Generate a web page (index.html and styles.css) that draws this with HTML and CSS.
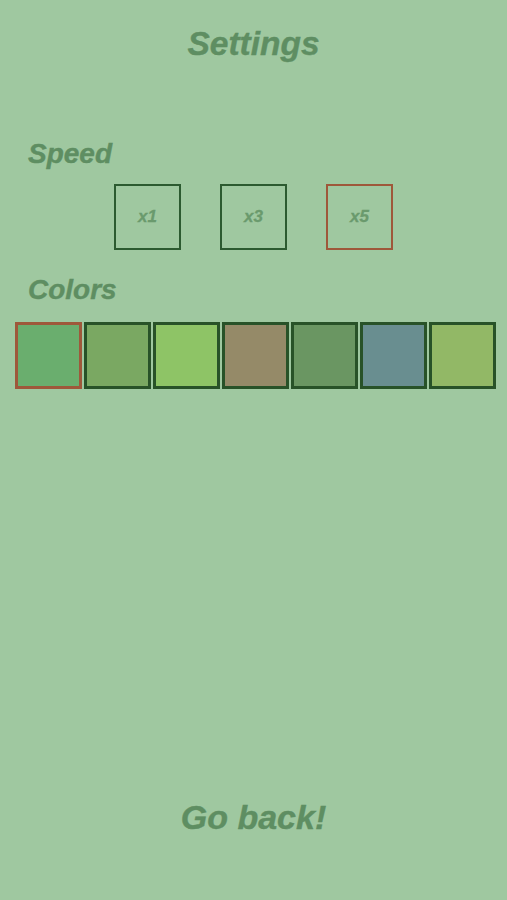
FILE: index.html
```html
<!DOCTYPE html>
<html>
<head>
<meta charset="utf-8">
<link rel="stylesheet" href="styles.css">
</head>
<body>
<div class="screen">
  <h1 class="title">Settings</h1>
  <div class="label label-speed">Speed</div>
  <div class="speed-row">
    <div class="speed-box">x1</div>
    <div class="speed-box">x3</div>
    <div class="speed-box selected">x5</div>
  </div>
  <div class="label label-colors">Colors</div>
  <div class="color-row">
    <div class="swatch selected c1"></div>
    <div class="swatch c2"></div>
    <div class="swatch c3"></div>
    <div class="swatch c4"></div>
    <div class="swatch c5"></div>
    <div class="swatch c6"></div>
    <div class="swatch c7"></div>
  </div>
  <div class="back">Go back!</div>
</div>
</body>
</html>
```
FILE: styles.css
```css
html, body {
  margin: 0;
  padding: 0;
  background: #9fc8a0;
}
.screen {
  height: 900px;
  display: flex;
  flex-direction: column;
  font-family: "Liberation Sans", Arial, sans-serif;
  font-weight: bold;
  font-style: italic;
  color: #5e8e62;
  -webkit-text-stroke: 0.4px #5e8e62;
}
.title {
  margin: 0;
  padding-top: 24px;
  font-size: 33.5px;
  line-height: 40px;
  text-align: center;
  font-weight: bold;
}
.label {
  font-size: 28px;
  line-height: 30px;
  padding-left: 28px;
}
.label-speed { margin-top: 75px; }
.label-colors { margin-top: 25px; }
.speed-row {
  margin-top: 15px;
  display: flex;
  justify-content: center;
  gap: 39px;
}
.speed-box {
  box-sizing: border-box;
  width: 67px;
  height: 66px;
  border: 2px solid #2c5a30;
  display: flex;
  align-items: center;
  justify-content: center;
  font-size: 17px;
  color: #6a9a6d;
  -webkit-text-stroke: 0.3px #6a9a6d;
}
.speed-box.selected { border-color: #9e583a; }
.color-row {
  margin-top: 17px;
  display: flex;
  justify-content: center;
  gap: 2px;
  padding-left: 3px;
}
.swatch {
  box-sizing: border-box;
  width: 67px;
  height: 67px;
  border: 3px solid #285228;
}
.swatch.selected { border-color: #9e583a; }
.c1 { background: #6aae6e; }
.c2 { background: #7aa862; }
.c3 { background: #8ec466; }
.c4 { background: #958a68; }
.c5 { background: #6a9662; }
.c6 { background: #698e90; }
.c7 { background: #92b866; }
.back {
  margin-top: auto;
  padding-bottom: 63px;
  font-size: 34px;
  line-height: 40px;
  text-align: center;
}
```
